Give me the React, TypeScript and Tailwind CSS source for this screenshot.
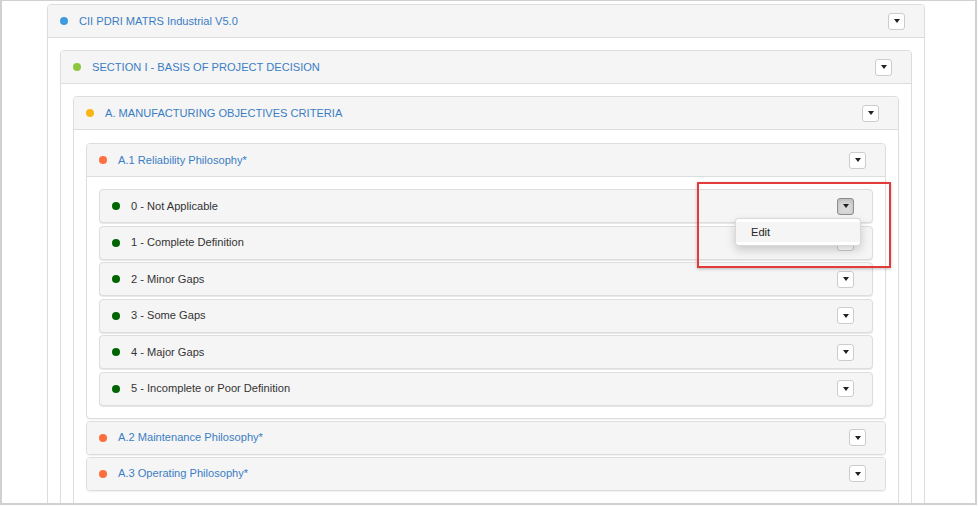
import React from "react";

const font = { fontFamily: '"Liberation Sans", Arial, Helvetica, sans-serif' };

function Caret() {
  return (
    <span className="block w-0 h-0 border-l-[3.5px] border-r-[3.5px] border-t-[4px] border-l-transparent border-r-transparent border-t-[#222]" />
  );
}

function Btn({ active = false }: { active?: boolean }) {
  return (
    <div
      className={
        active
          ? "w-[17px] h-[17px] rounded-[3px] border border-[#8c8c8c] bg-[#d9d9d9] shadow-[inset_0_2px_4px_rgba(0,0,0,0.15)] flex items-center justify-center"
          : "w-[17px] h-[17px] rounded-[3px] border border-[#cccccc] bg-white flex items-center justify-center"
      }
    >
      <Caret />
    </div>
  );
}

function Header({
  dot,
  title,
  open,
}: {
  dot: string;
  title: string;
  open: boolean;
}) {
  return (
    <div
      className={
        open
          ? "h-[33px] bg-[#f5f5f5] border-b border-[#dddddd] rounded-t-[3px] flex items-center pl-[12px] pr-[19px]"
          : "h-[32px] bg-[#f5f5f5] rounded-[3px] flex items-center pl-[12px] pr-[19px]"
      }
    >
      <span className="w-[8px] h-[8px] rounded-full shrink-0" style={{ backgroundColor: dot }} />
      <span className="ml-[11px] text-[11.1px] text-[#3b7dc4] flex-1">{title}</span>
      <Btn />
    </div>
  );
}

function Panel({
  dot,
  title,
  children,
}: {
  dot: string;
  title: string;
  children?: React.ReactNode;
}) {
  const open = !!children;
  return (
    <div className="border border-[#dddddd] rounded-[4px] bg-white shadow-[0_1px_1px_rgba(0,0,0,0.06)]">
      <Header dot={dot} title={title} open={open} />
      {open && <div className="p-[12px] flex flex-col gap-[2px]">{children}</div>}
    </div>
  );
}

const items = [
  "0 - Not Applicable",
  "1 - Complete Definition",
  "2 - Minor Gaps",
  "3 - Some Gaps",
  "4 - Major Gaps",
  "5 - Incomplete or Poor Definition",
];

function Item({ label, idx }: { label: string; idx: number }) {
  return (
    <div className={idx === 0 ? "relative z-10" : "relative"}>
      <div className="h-[34px] border border-[#dddddd] rounded-[4px] bg-[#f5f5f5] shadow-[0_1px_1px_rgba(0,0,0,0.1)] flex items-center pl-[12px] pr-[18px]">
        <span className="w-[8px] h-[8px] rounded-full shrink-0 bg-[#006400]" />
        <span className="ml-[11px] text-[11.1px] text-[#333333] flex-1">{label}</span>
        <Btn active={idx === 0} />
      </div>
      {idx === 0 && (
        <div className="absolute top-[29px] right-[12px] w-[126px] bg-white border border-[rgba(0,0,0,0.15)] rounded-[4px] shadow-[0_4px_10px_rgba(0,0,0,0.18)] py-[3px]">
          <div className="h-[20px] bg-[#f5f5f5] flex items-center pl-[15px] text-[11.1px] text-[#262626]">
            Edit
          </div>
        </div>
      )}
    </div>
  );
}

export default function App() {
  return (
    <div className="w-[979px] h-[507px] bg-white" style={font}>
      <div className="relative w-[977px] h-[505px] border-l-2 border-r-2 border-t border-b-2 border-[#d0d0d0] overflow-hidden">
        <div className="pl-[45px] pt-[3px]">
          <div className="w-[878px]">
            <Panel dot="#3d9be0" title="CII PDRI MATRS Industrial V5.0">
              <Panel dot="#8dc63f" title="SECTION I - BASIS OF PROJECT DECISION">
                <Panel dot="#fbb515" title="A. MANUFACTURING OBJECTIVES CRITERIA">
                  <div className="mt-[1px] flex flex-col gap-[2px]">
                    <Panel dot="#fd6f3f" title="A.1 Reliability Philosophy*">
                      <div className="flex flex-col gap-[2.5px]">
                        {items.map((l, i) => (
                          <Item key={l} label={l} idx={i} />
                        ))}
                      </div>
                    </Panel>
                    <Panel dot="#fd6f3f" title="A.2 Maintenance Philosophy*" />
                    <Panel dot="#fd6f3f" title="A.3 Operating Philosophy*" />
                    <div className="h-[40px]" />
                  </div>
                </Panel>
              </Panel>
            </Panel>
          </div>
        </div>
        <div className="absolute left-[695px] top-[181px] w-[194px] h-[86px] border-2 border-[#e23b3b] shadow-[0_1px_3px_rgba(0,0,0,0.25)] z-20" />
      </div>
    </div>
  );
}
